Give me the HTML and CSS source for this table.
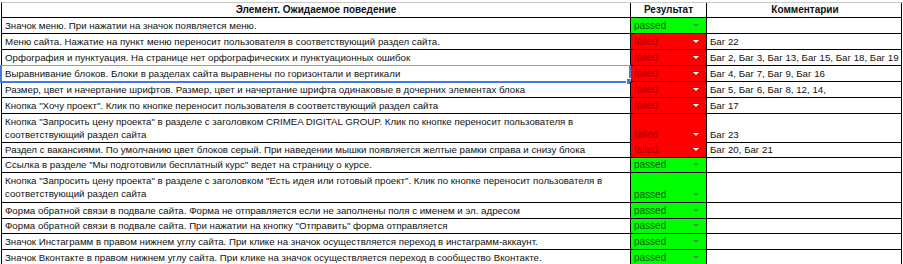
FILE: index.html
```html
<!DOCTYPE html>
<html lang="ru">
<head>
<meta charset="utf-8">
<title>Чек-лист</title>
<link rel="stylesheet" href="styles.css">
</head>
<body>
<div class="sheet">
  <div class="row head h15">
    <div class="cell c1 center">Элемент. Ожидаемое поведение</div>
    <div class="cell c2 center">Результат</div>
    <div class="cell c3 center">Комментарии</div>
  </div>
  <div class="row h16">
    <div class="cell c1">Значок меню. При нажатии на значок появляется меню.</div>
    <div class="cell c2 ok">passed<span class="arr"></span></div>
    <div class="cell c3"></div>
  </div>
  <div class="row h16">
    <div class="cell c1">Меню сайта. Нажатие на пункт меню переносит пользователя в соответствующий раздел сайта.</div>
    <div class="cell c2 bad">failed<span class="arr"></span></div>
    <div class="cell c3">Баг 22</div>
  </div>
  <div class="row h16">
    <div class="cell c1">Орфография и пунктуация. На странице нет орфографических и пунктуационных ошибок</div>
    <div class="cell c2 bad">failed<span class="arr"></span></div>
    <div class="cell c3">Баг 2, Баг 3, Баг 13, Баг 15, Баг 18, Баг 19</div>
  </div>
  <div class="row h16 selected-row">
    <div class="cell c1">Выравнивание блоков. Блоки в разделах сайта выравнены по горизонтали и вертикали<span class="sel"><span class="handle"></span></span></div>
    <div class="cell c2 bad">failed<span class="arr"></span></div>
    <div class="cell c3">Баг 4, Баг 7, Баг 9, Баг 16</div>
  </div>
  <div class="row h16">
    <div class="cell c1">Размер, цвет и начертание шрифтов. Размер, цвет и начертание шрифта одинаковые в дочерних элементах блока</div>
    <div class="cell c2 bad">failed<span class="arr"></span></div>
    <div class="cell c3">Баг 5, Баг 6, Баг 8, 12, 14,</div>
  </div>
  <div class="row h16">
    <div class="cell c1">Кнопка "Хочу проект". Клик по кнопке переносит пользователя в соответствующий раздел сайта</div>
    <div class="cell c2 bad">failed<span class="arr"></span></div>
    <div class="cell c3">Баг 17</div>
  </div>
  <div class="row h28">
    <div class="cell c1 wrap">Кнопка "Запросить цену проекта" в разделе с заголовком CRIMEA DIGITAL GROUP. Клик по кнопке переносит пользователя в соответствующий раздел сайта</div>
    <div class="cell c2 bad">failed<span class="arr"></span></div>
    <div class="cell c3">Баг 23</div>
  </div>
  <div class="row h16">
    <div class="cell c1">Раздел с вакансиями. По умолчанию цвет блоков серый. При наведении мышки появляется желтые рамки справа и снизу блока</div>
    <div class="cell c2 bad">failed<span class="arr"></span></div>
    <div class="cell c3">Баг 20, Баг 21</div>
  </div>
  <div class="row h15">
    <div class="cell c1">Ссылка в разделе "Мы подготовили бесплатный курс" ведет на страницу о курсе.</div>
    <div class="cell c2 ok">passed<span class="arr"></span></div>
    <div class="cell c3"></div>
  </div>
  <div class="row h30">
    <div class="cell c1 wrap">Кнопка "Запросить цену проекта" в разделе с заголовком "Есть идея или готовый проект". Клик по кнопке переносит пользователя в соответствующий раздел сайта</div>
    <div class="cell c2 ok">passed<span class="arr"></span></div>
    <div class="cell c3"></div>
  </div>
  <div class="row h16">
    <div class="cell c1">Форма обратной связи в подвале сайта. Форма не отправляется если не заполнены поля с именем и эл. адресом</div>
    <div class="cell c2 ok">passed<span class="arr"></span></div>
    <div class="cell c3"></div>
  </div>
  <div class="row h15">
    <div class="cell c1">Форма обратной связи в подвале сайта. При нажатии на кнопку "Отправить" форма отправляется</div>
    <div class="cell c2 ok">passed<span class="arr"></span></div>
    <div class="cell c3"></div>
  </div>
  <div class="row h16">
    <div class="cell c1">Значок Инстаграмм в правом нижнем углу сайта. При клике на значок осуществляется переход в инстаграмм-аккаунт.</div>
    <div class="cell c2 ok">passed<span class="arr"></span></div>
    <div class="cell c3"></div>
  </div>
  <div class="row h16">
    <div class="cell c1">Значок Вконтакте в правом нижнем углу сайта. При клике на значок осуществляется переход в сообщество Вконтакте.</div>
    <div class="cell c2 ok">passed<span class="arr"></span></div>
    <div class="cell c3"></div>
  </div>
</div>
</body>
</html>
```

FILE: styles.css
```css
html, body {
  margin: 0;
  padding: 0;
  background: #fff;
}
body {
  font-family: "Liberation Sans", Arial, sans-serif;
  font-size: 9.7px;
  color: #111;
  overflow: hidden;
}
.sheet {
  margin: 2px 0 0 1px;
  width: 901px;
  border-top: 1px solid #c8c8c8;
  border-left: 1px solid #000;
}
.row {
  display: grid;
  grid-template-columns: 629px 76px 195px;
}
.h15 { height: 15px; }
.h16 { height: 16px; }
.h28 { height: 28px; }
.h30 { height: 30px; }
.cell {
  box-sizing: border-box;
  border-right: 1px solid #000;
  border-bottom: 1px solid #000;
  padding: 0 3px 1px 3px;
  line-height: 13px;
  white-space: nowrap;
  overflow: hidden;
  display: flex;
  align-items: flex-end;
  position: relative;
}
.cell.wrap {
  white-space: normal;
  display: block;
  padding-top: 1px;
}
.head .cell {
  font-weight: bold;
  color: #111;
  font-size: 10px;
}
.center { justify-content: center; }
.c3 { padding-right: 1px; }
.ok {
  background: #00ff00;
  color: #0a560a;
  font-size: 10px;
}
.bad {
  background: #ff0000;
  color: #a00000;
  font-size: 10px;
}
.arr {
  position: absolute;
  right: 7px;
  bottom: 6px;
  width: 0;
  height: 0;
  border-left: 3px solid transparent;
  border-right: 3px solid transparent;
  border-top: 3px solid #4a914a;
}
.bad .arr { border-top-color: #fff; }
.c1 { overflow: visible; }
.sel {
  position: absolute;
  left: -2px;
  top: -1px;
  right: -1px;
  bottom: -2px;
  border: 2px solid #3f7be0;
  border-top: 1px solid #7aa3e6;
  pointer-events: none;
}
.handle {
  position: absolute;
  right: -4px;
  bottom: -4px;
  width: 5px;
  height: 5px;
  background: #3f7be0;
  border: 1px solid #fff;
}
```
